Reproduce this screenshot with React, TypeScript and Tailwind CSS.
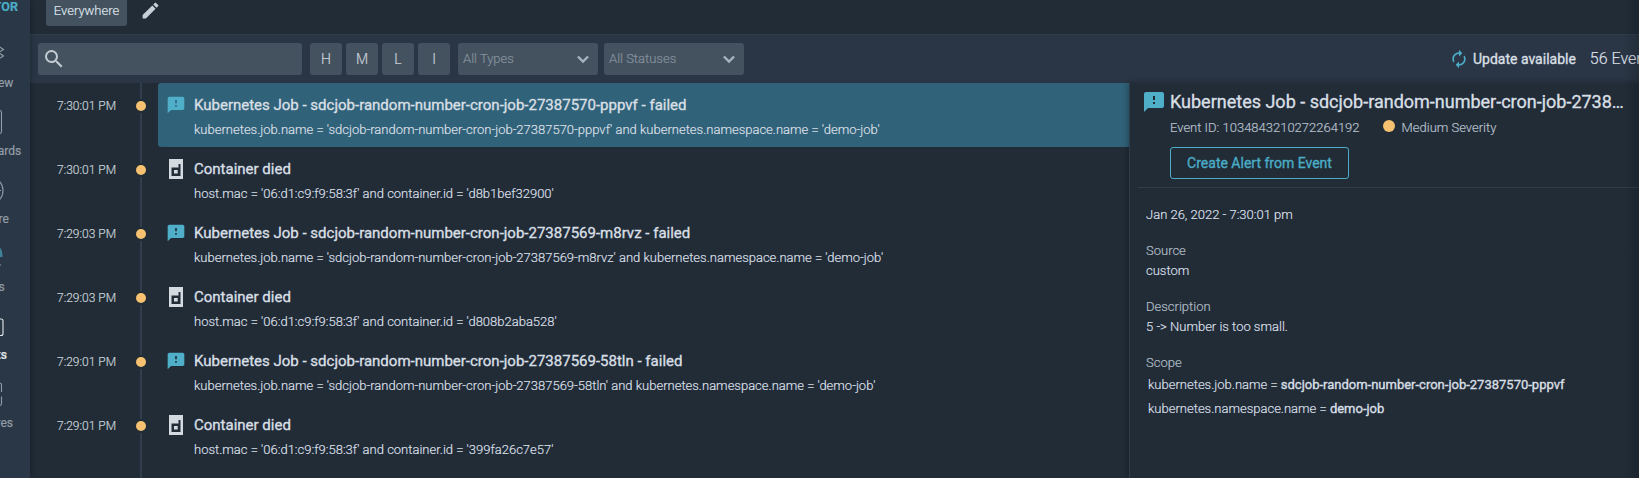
import type { ReactNode } from 'react';
import { MdAutorenew, MdEdit, MdFeedback, MdSearch } from 'react-icons/md';

type EventKind = 'job' | 'container';

interface EventItem {
  time: string;
  kind: EventKind;
  title: string;
  scope: string;
}

const jobEvent = (time: string, id: string): EventItem => ({
  time,
  kind: 'job',
  title: `Kubernetes Job - sdcjob-random-number-cron-job-${id} - failed`,
  scope: `kubernetes.job.name = 'sdcjob-random-number-cron-job-${id}' and kubernetes.namespace.name = 'demo-job'`,
});

const containerEvent = (time: string, id: string): EventItem => ({
  time,
  kind: 'container',
  title: 'Container died',
  scope: `host.mac = '06:d1:c9:f9:58:3f' and container.id = '${id}'`,
});

const events: EventItem[] = [
  jobEvent('7:30:01 PM', '27387570-pppvf'),
  containerEvent('7:30:01 PM', 'd8b1bef32900'),
  jobEvent('7:29:03 PM', '27387569-m8rvz'),
  containerEvent('7:29:03 PM', 'd808b2aba528'),
  jobEvent('7:29:01 PM', '27387569-58tln'),
  containerEvent('7:29:01 PM', '399fa26c7e57'),
];

const navItems: { label: string; active?: boolean; icon: ReactNode }[] = [
  {
    label: 'Overview',
    icon: (
      <>
        <path d="M19 15 33.5 24.5 19 33 4.500 24.5Z" />
        <path d="M30 28.5 33.5 31 19 40 4.500 31 8 28.5" />
      </>
    ),
  },
  { label: 'Dashboards', icon: <rect x="6" y="17.5" width="25.5" height="23" rx="2" /> },
  {
    label: 'Explore',
    icon: (
      <>
        <circle cx="19" cy="29.5" r="14" />
        <path d="M28 29.5h3" />
      </>
    ),
  },
  {
    label: 'Alerts',
    icon: (
      <>
        <path d="M5 28c0-8 5-14 13-14 9 0 14 4 14.500 12v2Z" fill="#3f8298" stroke="none" />
        <path d="M6 36h25" />
      </>
    ),
  },
  { label: 'Events', active: true, icon: <rect x="5" y="22" width="28" height="16.500" rx="2" /> },
  {
    label: 'Captures',
    icon: <path d="M6 27v-7a2 2 0 0 1 2-2h21.500a2 2 0 0 1 2 2v7M31.500 31.500v7a2 2 0 0 1-2 2H8a2 2 0 0 1-2-2v-7" />,
  },
];

function Sidebar() {
  return (
    <nav className="z-10 -ml-[52px] flex w-[82px] shrink-0 flex-col bg-[#2a3746] shadow-[1px_0_5px_rgba(0,0,0,0.25)]">
      <div className="flex h-[25px] items-start justify-end pr-3 text-[12.500px] leading-[14px] font-bold tracking-[0.1px] text-[#4bacc6]">
        MONITOR
      </div>
      {navItems.map((item) => (
        <div
          key={item.label}
          className={`flex h-[68px] flex-col items-center ${item.active ? 'text-[#e3e8ec]' : 'text-[#929da7]'}`}
        >
          <svg className="block h-12 w-[38px] shrink-0" viewBox="0 0 38 48" fill="none" stroke="currentColor" strokeWidth="1.100">
            {item.icon}
          </svg>
          <span className={`text-[12px] leading-5 ${item.active ? 'font-medium' : 'font-normal'}`}>{item.label}</span>
        </div>
      ))}
    </nav>
  );
}

function FilterSelect({ label }: { label: string }) {
  return (
    <div className="flex h-8 w-[140px] items-center justify-between rounded-[3px] bg-[#445260] pr-[3px] pl-[5px] text-[13px] font-light text-[#84919c]">
      {label}
      <svg className="size-6" viewBox="0 0 24 24" fill="none" stroke="#a7b3bd" strokeWidth="2.400">
        <path d="m6.900 9.500 5.100 5.100 5.100-5.100" />
      </svg>
    </div>
  );
}

function Toolbar() {
  return (
    <div className="flex h-[49px] shrink-0 items-center border-t border-[#2f3c4a] bg-[#2a3645] pl-2">
      <div className="flex h-8 w-[264px] items-center rounded-[3px] bg-[#445260] pb-px pl-1">
        <MdSearch className="size-6 text-[#c3ccd3]" />
      </div>
      <div className="ml-2 flex gap-1">
        {['H', 'M', 'L', 'I'].map((level) => (
          <button key={level} className="size-8 rounded-[3px] bg-[#445260] text-[14px] font-light text-[#c8d0d7]">
            {level}
          </button>
        ))}
      </div>
      <div className="ml-2 flex gap-1.5">
        <FilterSelect label="All Types" />
        <FilterSelect label="All Statuses" />
      </div>
      <div className="ml-auto flex w-[190px] shrink-0 items-center overflow-hidden whitespace-nowrap text-[#d8dfe4]">
        <MdAutorenew className="size-5 shrink-0 text-[#4bacc6]" />
        <span className="ml-1 text-[14px] [-webkit-text-stroke:0.35px]">Update available</span>
        <span className="ml-3.5 text-[16px] font-light">56 Events</span>
      </div>
    </div>
  );
}

function ContainerIcon() {
  return (
    <svg className="block h-5 w-[14px]" viewBox="0 0 14 20">
      <path fill="#d3dae0" d="M0 0h14v20H0z" />
      <path fill="#212c37" fillRule="evenodd" d="M9.500 5h2v12h-9V8.500h7V5ZM5 11v3.500h3.700V11H5Z" />
    </svg>
  );
}

function EventRow({ event, selected }: { event: EventItem; selected: boolean }) {
  return (
    <li className="flex h-16 shrink-0">
      <div className="w-[106px] pt-[14px] pl-[27px] text-[12px] leading-[18px] font-light text-[#c6cfd5]">{event.time}</div>
      <div className="flex w-[10px] flex-col items-center">
        <div className="h-4 w-0.5 bg-[#2f3d4d]" />
        <div className="my-0.5 size-[10px] shrink-0 rounded-full bg-[#f6c170]" />
        <div className="w-0.5 flex-1 bg-[#2f3d4d]" />
      </div>
      <div className={`ml-3 flex flex-1 rounded-l-[3px] ${selected ? 'bg-[#306279]' : ''}`}>
        <div className="flex w-9 shrink-0 justify-center pt-3">
          {event.kind === 'job' ? <MdFeedback className="size-5 text-[#4fafc8]" /> : <ContainerIcon />}
        </div>
        <div className="whitespace-nowrap">
          <div className="pt-3 text-[15px] leading-5 text-[#d8dfe4] [-webkit-text-stroke:0.35px]">{event.title}</div>
          <div className="pt-[5px] text-[13px] leading-5 font-light text-[#d8dfe4]">{event.scope}</div>
        </div>
      </div>
    </li>
  );
}

function Field({ label, children }: { label: string; children: ReactNode }) {
  return (
    <div className="mt-4">
      <div className="font-light text-[#b0bbc4]">{label}</div>
      {children}
    </div>
  );
}

function ScopeLine({ name, value }: { name: string; value: string }) {
  return (
    <div className="pl-0.5 leading-6">
      {name} = <span className="font-normal [-webkit-text-stroke:0.35px]">{value}</span>
    </div>
  );
}

function DetailPanel() {
  return (
    <aside className="z-10 flex w-[510px] shrink-0 flex-col border-l border-[#2f3c4c] bg-[#212c37] pl-2 shadow-[-1px_0_6px_rgba(0,0,0,0.3)]">
      <header className="flex h-[105px] shrink-0 border-b border-[#2f3c4a] pl-1">
        <MdFeedback className="mt-[7px] size-6 shrink-0 text-[#4fafc8]" />
        <div className="ml-1 flex min-w-0 flex-col items-start whitespace-nowrap">
          <h2 className="w-[456px] truncate pt-[7px] text-[18px] leading-6 text-[#d8dfe4] [-webkit-text-stroke:0.35px]">
            Kubernetes Job - sdcjob-random-number-cron-job-27387570-pppvf - failed
          </h2>
          <div className="mt-1 flex items-center text-[13px] leading-5 font-light text-[#b4bfc8]">
            Event ID: 1034843210272264192
            <span className="mb-1 ml-[23px] size-3 rounded-full bg-[#f6c170]" />
            <span className="ml-[7px]">Medium Severity</span>
          </div>
          <button className="mt-[9px] h-8 w-[179px] rounded-[3px] border border-[#4bacc6] text-[14px] text-[#4bacc6] [-webkit-text-stroke:0.35px]">
            Create Alert from Event
          </button>
        </div>
      </header>
      <div className="pt-[17px] pl-2 text-[13px] leading-5 font-light text-[#d8dfe4]">
        <div>Jan 26, 2022 - 7:30:01 pm</div>
        <Field label="Source">custom</Field>
        <Field label="Description">5 -&gt; Number is too small.</Field>
        <Field label="Scope">
          <ScopeLine name="kubernetes.job.name" value="sdcjob-random-number-cron-job-27387570-pppvf" />
          <ScopeLine name="kubernetes.namespace.name" value="demo-job" />
        </Field>
      </div>
    </aside>
  );
}

export default function App() {
  return (
    <div className="relative flex h-[478px] w-full overflow-hidden bg-[#212c37] font-[Roboto,sans-serif] antialiased [-webkit-text-stroke:0.2px]">
      <Sidebar />
      <main className="flex min-w-0 flex-1 flex-col">
        <div className="flex h-[34px] shrink-0 items-start pl-4">
          <div className="flex h-[26px] w-[81px] items-start justify-center rounded-b-[3px] bg-[#445260] pt-px text-[13px] leading-5 font-light text-[#dce2e7]">
            Everywhere
          </div>
          <MdEdit className="ml-[13px] size-[21px] text-[#c8d0d7]" />
        </div>
        <Toolbar />
        <div className="flex min-h-0 flex-1">
          <ul className="flex min-w-0 flex-1 flex-col overflow-hidden">
            {events.map((event, i) => (
              <EventRow key={event.scope} event={event} selected={i === 0} />
            ))}
            <li className="flex-1 pl-[110px]">
              <div className="h-full w-0.5 bg-[#2f3d4d]" />
            </li>
          </ul>
          <DetailPanel />
        </div>
      </main>
      <div className="pointer-events-none absolute inset-y-0 right-0 z-20 w-4 bg-linear-to-r from-transparent to-black/15" />
    </div>
  );
}
